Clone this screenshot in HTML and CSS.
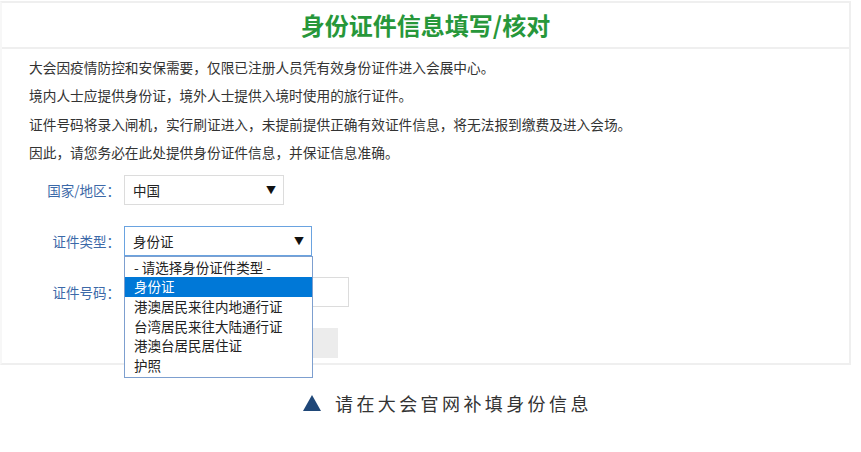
FILE: index.html
```html
<!DOCTYPE html>
<html lang="zh-CN">
<head>
    <meta charset="UTF-8">
    <title>身份证件信息填写/核对</title>
    <link rel="stylesheet" href="styles.css">
</head>
<body>
    <div class="panel">
        <div class="panel-head">
            <h1>身份证件信息填写/核对</h1>
        </div>
        <div class="panel-body">
            <p>大会因疫情防控和安保需要，仅限已注册人员凭有效身份证件进入会展中心。</p>
            <p>境内人士应提供身份证，境外人士提供入境时使用的旅行证件。</p>
            <p>证件号码将录入闸机，实行刷证进入，未提前提供正确有效证件信息，将无法报到缴费及进入会场。</p>
            <p>因此，请您务必在此处提供身份证件信息，并保证信息准确。</p>

            <div class="form">
                <div class="form-row">
                    <label>国家/地区：</label>
                    <div class="select">中国<span class="arrow">▼</span></div>
                </div>
                <div class="form-row">
                    <label>证件类型：</label>
                    <div class="select select-open">身份证<span class="arrow">▼</span>
                        <ul class="options">
                            <li>- 请选择身份证件类型 -</li>
                            <li class="active">身份证</li>
                            <li>港澳居民来往内地通行证</li>
                            <li>台湾居民来往大陆通行证</li>
                            <li>港澳台居民居住证</li>
                            <li>护照</li>
                        </ul>
                    </div>
                </div>
                <div class="form-row">
                    <label>证件号码：</label>
                    <div class="input"></div>
                </div>
                <div class="form-row">
                    <label></label>
                    <div class="button"></div>
                </div>
            </div>
        </div>
    </div>

    <p class="caption">
        <svg class="tri" width="18" height="16" viewBox="0 0 18 16"><polygon points="9,0 18,16 0,16" fill="#1f4778"/></svg>
        <span>请在大会官网补填身份信息</span>
    </p>
</body>
</html>
```

FILE: styles.css
```css
body {
    margin: 0;
    background-color: #fff;
    font-family: "Noto Sans CJK SC", "Noto Sans", sans-serif;
    color: #333;
}

.panel {
    width: 847px;
    margin-top: 1px;
    border: 2px solid #efefef;
    border-left-color: #f7f7f7;
    height: 360px;
}

.panel-head {
    height: 44px;
    border-bottom: 2px solid #efefef;
    display: flex;
    align-items: center;
    justify-content: center;
}

.panel-head h1 {
    margin: 0;
    font-size: 24px;
    font-weight: bold;
    color: #27973a;
    line-height: 1;
}

.panel-body {
    padding: 4px 0 0 27px;
    font-size: 13.7px;
}

.panel-body p {
    margin: 0;
    line-height: 28.4px;
}

.form {
    margin-top: 8px;
    display: flex;
    flex-direction: column;
    gap: 21px;
}

.form-row {
    display: flex;
    align-items: center;
    height: 30px;
}

.form-row label {
    width: 91px;
    margin-right: 4px;
    text-align: right;
    color: #3c69a8;
    font-size: 13.5px;
}

.select {
    position: relative;
    width: 150px;
    height: 28px;
    border: 1px solid #dcdcdc;
    padding-left: 8px;
    font-size: 13.5px;
    line-height: 28px;
    color: #222;
}

.select .arrow {
    position: absolute;
    right: 7px;
    top: 0;
    font-size: 10px;
    color: #111;
}

.select-open {
    width: 178px;
    border-color: #6aa3e0;
}

.options {
    position: absolute;
    left: -1px;
    top: 29px;
    width: 187px;
    margin: 0;
    padding: 1px 0;
    list-style: none;
    border: 1px solid #7d9fcf;
    background-color: #fff;
    z-index: 2;
}

.options li {
    height: 19.7px;
    line-height: 19.7px;
    padding-left: 9px;
    font-size: 13.5px;
    color: #222;
}

.options li.active {
    background-color: #0078d7;
    color: #fff;
}

.input {
    width: 223px;
    height: 28px;
    border: 1px solid #dcdcdc;
}

.button {
    width: 214px;
    height: 30px;
    background-color: #ececec;
}

.caption {
    margin: 25px 0 0 0;
    padding-left: 303px;
    display: flex;
    align-items: center;
    font-size: 18px;
    letter-spacing: 3.4px;
    color: #333;
}

.caption .tri {
    margin-right: 14px;
}
```
